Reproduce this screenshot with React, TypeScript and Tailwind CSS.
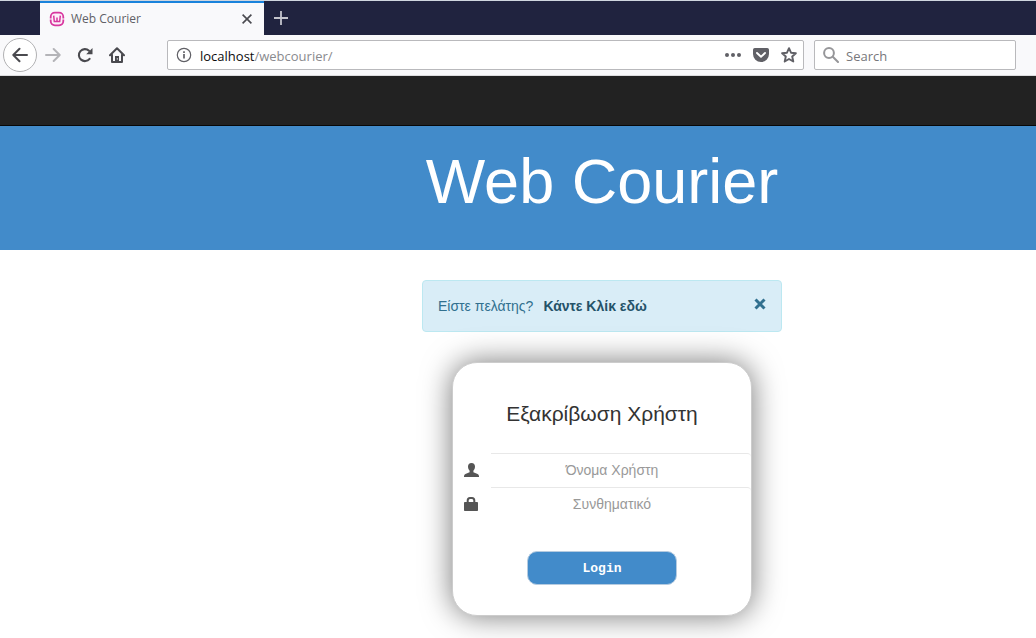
import { useState } from "react";

function TabIcon() {
  return (
    <svg viewBox="0 0 16 16" className="h-4 w-4 shrink-0" fill="none" aria-hidden="true">
      <rect x="1.7" y="1.7" width="12.600" height="12.600" rx="4.2" fill="#fdf0f9" stroke="#d8379f" strokeWidth="1.8" />
      <path d="M0 8h3M13 8h3" stroke="#f9f9fb" strokeWidth="1.2" />
      <path d="M4.700 4.600l.6 6h5.400l.6-6M8 6.500v4" stroke="#d8379f" strokeWidth="1.5" />
    </svg>
  );
}

function BrowserTabs() {
  return (
    <div className="flex h-[35px] border-t border-[#cfd6df] bg-[#20233f] pl-10">
      <div className="flex w-56 items-center border-t-2 border-[#1a83dc] bg-[#f9f9fb] pr-2 pb-px pl-[9px]">
        <TabIcon />
        <span className="ml-1.5 flex-1 text-xs text-[#606066]">Web Courier</span>
        <button type="button" aria-label="Close tab" className="p-1">
          <svg viewBox="0 0 10 10" className="h-2.5 w-2.5" stroke="#4a4a4f" strokeWidth="1.6" aria-hidden="true">
            <path d="M.6.6l8.800 8.800M9.400.6L.6 9.400" />
          </svg>
        </button>
      </div>
      <button type="button" aria-label="New tab" className="px-2.5">
        <svg viewBox="0 0 14 14" className="h-3.5 w-3.5" stroke="#c3c4cc" strokeWidth="1.8" aria-hidden="true">
          <path d="M7 0v14M0 7h14" />
        </svg>
      </button>
    </div>
  );
}

function Toolbar() {
  return (
    <div className="flex h-[41px] items-center border-b border-[#dcdcde] bg-[#f9f9fb] pr-5 pl-[3px]">
      <button
        type="button"
        aria-label="Back"
        className="flex h-[34px] w-[34px] items-center justify-center rounded-full border border-[#b1b1b3] bg-white"
      >
        <svg viewBox="0 0 16 16" className="h-4 w-4" fill="none" stroke="#4a4a4f" strokeWidth="2" strokeLinecap="round" strokeLinejoin="round" aria-hidden="true">
          <path d="M15 8H1.500M7.500 1.800L1.300 8l6.200 6.200" />
        </svg>
      </button>
      <button type="button" aria-label="Forward" className="ml-2">
        <svg viewBox="0 0 16 16" className="h-4 w-4" fill="none" stroke="#b4b4b8" strokeWidth="2" strokeLinecap="round" strokeLinejoin="round" aria-hidden="true">
          <path d="M1 8h13.500M8.700 2l6 6-6 6" />
        </svg>
      </button>
      <button type="button" aria-label="Reload" className="ml-4">
        <svg viewBox="0 0 16 16" className="h-4 w-4" fill="none" aria-hidden="true">
          <path d="M12.600 11.800A6 6 0 1 1 12 3.700" stroke="#4a4a4f" strokeWidth="2.1" strokeLinecap="round" />
          <path d="M15.500 1v6.200H9.200z" fill="#4a4a4f" />
        </svg>
      </button>
      <button type="button" aria-label="Home" className="ml-4">
        <svg viewBox="0 0 16 16" className="h-4 w-4" fill="none" stroke="#4a4a4f" strokeWidth="2" strokeLinecap="round" strokeLinejoin="round" aria-hidden="true">
          <path d="M1 8.300L8 1.200l7 7.100M3 7.800V15h10V7.800" />
          <path d="M6 9h4v6H6z" fill="#4a4a4f" stroke="none" />
          <path d="M8.300 11.300v1.200" stroke="#f9f9fb" strokeWidth="1" strokeLinecap="butt" />
        </svg>
      </button>
      <div className="ml-[42px] flex h-[30px] flex-1 items-center rounded-xs border border-[#b9b9bc] bg-white px-2">
        <svg viewBox="0 0 16 16" className="h-4 w-4 shrink-0" fill="none" stroke="#606066" aria-hidden="true">
          <circle cx="8" cy="8" r="6.7" strokeWidth="1.2" />
          <path d="M8 7v4.600" strokeWidth="1.7" />
          <path d="M8 4.200v1.700" strokeWidth="1.7" />
        </svg>
        <a href="/webcourier/" className="ml-2 flex-1 pt-[3px] text-[13px] text-[#8a8a8e]">
          <span className="text-[#0c0c0d]">localhost</span>/webcourier/
        </a>
        <button type="button" aria-label="Page actions">
          <svg viewBox="0 0 16 16" className="h-4 w-4" fill="#606066" aria-hidden="true">
            <circle cx="2" cy="8" r="2" />
            <circle cx="8" cy="8" r="2" />
            <circle cx="14" cy="8" r="2" />
          </svg>
        </button>
        <button type="button" aria-label="Save to Pocket" className="ml-3">
          <svg viewBox="0 0 16 16" className="h-4 w-4" fill="none" aria-hidden="true">
            <path d="M1.800 1h12.400A1.800 1.800 0 0 1 16 2.800V7A8 8 0 0 1 0 7V2.800A1.800 1.800 0 0 1 1.800 1z" fill="#606066" />
            <path d="M4 6l4 3.800L12 6" stroke="#fff" strokeWidth="1.9" strokeLinecap="round" strokeLinejoin="round" />
          </svg>
        </button>
        <button type="button" aria-label="Bookmark this page" className="-mr-2 ml-3 pr-1.5">
          <svg viewBox="0 0 16 16" className="h-4 w-4" fill="none" stroke="#606066" strokeWidth="1.9" strokeLinejoin="round" aria-hidden="true">
            <path d="M8 1.200l2 4.500 4.900.5-3.700 3.300 1.100 5L8 12l-4.300 2.500 1.100-5L1.100 6.200 6 5.700z" />
          </svg>
        </button>
      </div>
      <label className="ml-2.5 flex h-[30px] w-[202px] items-center rounded-xs border border-[#b9b9bc] bg-white px-2">
        <svg viewBox="0 0 16 16" className="h-4 w-4 shrink-0" fill="none" stroke="#969699" strokeWidth="2" strokeLinecap="round" aria-hidden="true">
          <circle cx="6" cy="6" r="4.9" />
          <path d="M9.800 9.800L15 15" />
        </svg>
        <input
          type="text"
          aria-label="Search"
          placeholder="Search"
          className="ml-[7px] min-w-0 flex-1 pt-[3px] text-[13px] outline-none placeholder:text-[#77777b]"
        />
      </label>
    </div>
  );
}

function UserIcon() {
  return (
    <svg viewBox="0 0 15 14" className="h-3.5 w-[15px]" fill="#555" aria-hidden="true">
      <path d="M7.500 0c2.300 0 3.500 1.500 3.500 3.600 0 1.900-.7 3.200-1.600 4.100v1.500l4.200 1.900c.8.4 1.200 1 1.400 1.900v1H0v-1c.2-.9.6-1.500 1.400-1.900l4.200-1.900V7.700C4.700 6.800 4 5.500 4 3.600 4 1.500 5.200 0 7.500 0z" />
    </svg>
  );
}

function LockIcon() {
  return (
    <svg viewBox="0 0 15 14" className="h-3.5 w-[15px]" aria-hidden="true">
      <rect x="0" y="5" width="14" height="9" rx="0.8" fill="#555" />
      <path d="M3.700 6V3.600Q3.700 1 6 1h2q2.300 0 2.300 2.600V6" fill="none" stroke="#555" strokeWidth="2" />
    </svg>
  );
}

function LoginForm() {
  const field =
    "h-[34px] min-w-0 flex-1 rounded-tr-sm border-t border-[#e8e8e8] pr-[30px] pb-0.5 pl-3 text-center text-sm outline-none placeholder:text-[#999]";
  return (
    <form
      onSubmit={(event) => event.preventDefault()}
      className="mt-[30px] flex w-[300px] flex-col rounded-[25px] border border-[#ccc] bg-white pb-[30px] shadow-[0_0_30px_#777]"
    >
      <h2 className="mt-[38px] mb-[26px] text-center text-[21px] leading-[26px] text-[#333]">Εξακρίβωση Χρήστη</h2>
      <div className="flex items-center">
        <label htmlFor="user" aria-label="Όνομα Χρήστη" className="w-[38px] pl-[11px]">
          <UserIcon />
        </label>
        <input id="user" type="text" placeholder="Όνομα Χρήστη" className={field} />
      </div>
      <div className="flex items-center">
        <label htmlFor="password" aria-label="Συνθηματικό" className="w-[38px] pl-[11px]">
          <LockIcon />
        </label>
        <input id="password" type="password" placeholder="Συνθηματικό" className={field} />
      </div>
      <button
        type="submit"
        className="mt-[30px] h-[34px] w-[150px] self-center rounded-[10px] border border-[#b5cbe0] bg-[#428bca] pt-0.5 font-['Liberation_Mono',monospace] text-[13px] font-bold text-white"
      >
        Login
      </button>
    </form>
  );
}

export default function App() {
  const [noticeOpen, setNoticeOpen] = useState(true);
  return (
    <div className="min-h-screen overflow-hidden bg-white font-['Liberation_Sans',Arial,sans-serif]">
      <header className="font-['Open_Sans',sans-serif]">
        <BrowserTabs />
        <Toolbar />
      </header>
      <nav className="h-[50px] border-b border-[#080808] bg-[#222]" />
      <div className="h-[124px] bg-[#428bca] pt-5 pl-[168px]">
        <h1 className="text-center text-[63px] leading-[70px] text-white">Web Courier</h1>
      </div>
      <main className="flex flex-col items-center pt-[30px] pb-[22px] pl-[168px]">
        {noticeOpen && (
          <div
            role="alert"
            className="flex h-[52px] w-[360px] items-center rounded-sm border border-[#bce8f1] bg-[#d9edf7] px-[15px] text-sm text-[#31708f]"
          >
            <span>Είστε πελάτης?</span>
            <a href="#customer" className="ml-2.5 flex-1 font-bold text-[#245269]">
              Κάντε Κλίκ εδώ
            </a>
            <button type="button" aria-label="Close" onClick={() => setNoticeOpen(false)} className="pb-1">
              <svg viewBox="0 0 12 12" className="h-3 w-3" stroke="#31708f" strokeWidth="3" aria-hidden="true">
                <path d="M1.500 1.500l9 9M10.500 1.500l-9 9" />
              </svg>
            </button>
          </div>
        )}
        <LoginForm />
      </main>
    </div>
  );
}
